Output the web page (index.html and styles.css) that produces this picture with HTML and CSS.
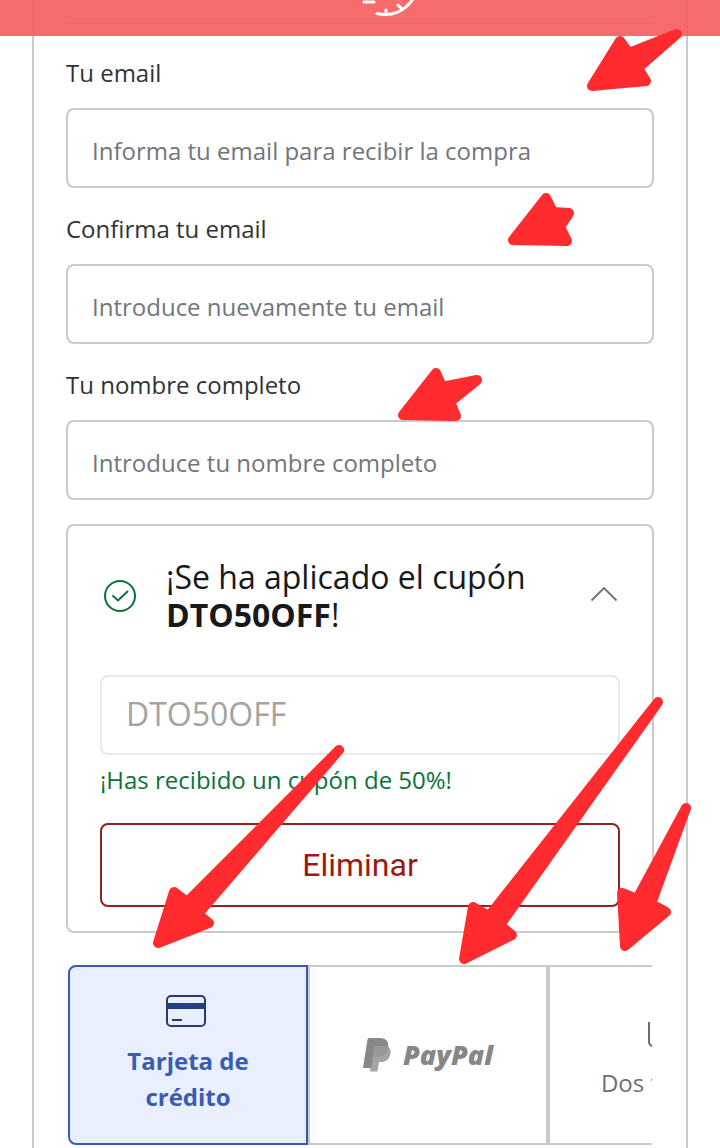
FILE: index.html
```
<!DOCTYPE html>
<html lang="es">
<head>
    <meta charset="UTF-8">
    <meta name="viewport" content="width=device-width, initial-scale=1.0">
    <title>Datos de compra</title>
    <link rel="stylesheet" href="styles.css">
</head>
<body>
    <div class="top-bar">
        <svg class="clock" width="64" height="36" viewBox="0 0 64 36" fill="none" stroke="#fff" stroke-width="3" stroke-linecap="round">
            <path d="M8 2h10"/>
            <path d="M21 13.500C36 17 49 11 57-1"/>
            <path d="M30 14l0-4M45 8l-3-3"/>
        </svg>
    </div>

    <main class="card">
        <hr class="divider">

        <form class="checkout">
            <div class="field">
                <label for="email">Tu email</label>
                <input type="email" id="email" placeholder="Informa tu email para recibir la compra">
            </div>
            <div class="field">
                <label for="email-confirm">Confirma tu email</label>
                <input type="email" id="email-confirm" placeholder="Introduce nuevamente tu email">
            </div>
            <div class="field">
                <label for="full-name">Tu nombre completo</label>
                <input type="text" id="full-name" placeholder="Introduce tu nombre completo">
            </div>

            <section class="coupon">
                <div class="coupon-header">
                    <svg class="coupon-check" width="32" height="32" viewBox="0 0 32 32" fill="none" stroke="#0a7239" stroke-width="2">
                        <circle cx="16" cy="16" r="15"/>
                        <path d="M8.500 15.500l5.500 5 10-9.500"/>
                    </svg>
                    <h2>¡Se ha aplicado el cupón <strong>DTO50OFF</strong>!</h2>
                    <button type="button" class="coupon-toggle" aria-label="Ocultar cupón">
                        <svg width="28" height="20" viewBox="0 0 28 20" fill="none" stroke="#6c7074" stroke-width="1.800">
                            <path d="M1.500 14.500L14 2l12.500 12.500"/>
                        </svg>
                    </button>
                </div>
                <input type="text" class="coupon-code" value="DTO50OFF" aria-label="Cupón" disabled>
                <p class="coupon-message">¡Has recibido un cupón de 50%!</p>
                <button type="button" class="remove-button">Eliminar</button>
            </section>

            <div class="payment-methods">
                <button type="button" class="method active">
                    <svg width="44" height="32" viewBox="0 0 44 32" fill="none" stroke="#283a6e" stroke-width="2">
                        <rect x="1" y="1" width="38" height="30" rx="4"/>
                        <path d="M1 11h38" stroke="#243f82" stroke-width="6"/>
                        <path d="M6 25h10"/>
                    </svg>
                    <span>Tarjeta de crédito</span>
                </button>
                <button type="button" class="method">
                    <span class="paypal">
                        <svg width="28" height="34" viewBox="0 0 28 34">
                            <path fill="#a5a5a5" d="M10 8h14.500c2.500 1.800 3.500 4.700 2.900 8-1 5.500-4.600 8-9.700 8h-1.700L14.300 33.500H7z"/>
                            <path fill="#878787" d="M4.500 1.500Q4.700 0 6.200 0H16c6.500 0 10.200 3 9.200 9-1 6.500-5 9.300-11 9.300h-2.800c-1 0-1.500.7-1.700 1.700L8.300 30H0z"/>
                            <path fill="#989898" d="M11 8h14.300c-.8 7-5 10.300-11.100 10.300h-2.800c-1 0-1.500.7-1.700 1.700L8.600 28z"/>
                        </svg>
                        PayPal
                    </span>
                </button>
                <button type="button" class="method">
                    <svg width="40" height="40" viewBox="0 0 40 40" fill="none" stroke="#6c7074" stroke-width="2">
                        <path d="M1 13v20a4 4 0 0 0 4 4h26"/>
                        <rect x="8" y="5" width="31" height="24" rx="4"/>
                    </svg>
                    <span>Dos tarjetas</span>
                </button>
            </div>
        </form>
    </main>

    <!-- Hand-placed arrows over the form -->
    <svg class="arrows" width="720" height="1148" viewBox="0 0 720 1148">
        <polygon points="592,86 620,41 629,53 677,34 638,68 646,81"/>
        <polygon points="513,240 546,198 553,212 569,213 560,227 567,241"/>
        <polygon points="403,415 436,373 442,387 477,380 450,402 456,416"/>
        <polygon points="158,943 174,892 187,902 339,750 198,914 209,923"/>
        <polygon points="464,959 473,907 489,916 658,702 500,925 512,935"/>
        <polygon points="625,946 622,893 637,899 686,808 651,904 666,912"/>
    </svg>
</body>
</html>
```

FILE: styles.css
```
* {
    box-sizing: border-box;
}
body {
    margin: 0;
    background-color: #fff;
    color: #2f3336;
    font-family: "Open Sans", sans-serif;
    font-size: 24px;
    line-height: 36px;
    overflow-x: hidden;
}
button, input {
    font-family: inherit;
    font-size: inherit;
}
.top-bar {
    position: fixed;
    top: 0;
    left: 0;
    right: 0;
    height: 36px;
    display: flex;
    justify-content: center;
    background-color: rgba(245, 96, 96, 0.92);
}
.clock {
    margin-left: 56px;
}
.card {
    min-height: 100vh;
    margin: 0 32px;
    padding: 22px 32px 32px;
    border: solid #c8cbce;
    border-width: 0 2px;
}
.divider {
    height: 2px;
    margin: 0 0 32px;
    border: none;
    background-color: #c8cbce;
}
.field {
    margin-bottom: 24px;
}
.field label {
    display: block;
    margin-bottom: 18px;
    line-height: 34px;
}
.field input, .coupon-code {
    display: block;
    width: 100%;
    height: 80px;
    padding: 4px 24px 0;
    border: 2px solid #c8cbce;
    border-radius: 8px;
    background-color: #fff;
}
.field input::placeholder {
    color: #70767b;
    opacity: 1;
}
.coupon {
    padding: 32px 32px 24px;
    border: 2px solid #c8cbce;
    border-radius: 8px;
}
.coupon-header {
    display: flex;
    align-items: center;
    gap: 30px;
    margin-bottom: 41px;
    padding: 0 2px 0 4px;
}
.coupon-header h2 {
    flex: 1;
    margin: 0;
    color: #17191b;
    font-size: 32px;
    font-weight: 400;
    line-height: 38px;
}
.coupon-check {
    flex: none;
}
.coupon-toggle {
    display: flex;
    padding: 0;
    border: none;
    background: none;
}
.coupon-code {
    padding: 0 24px 4px;
    border-color: #e8e9ea;
    color: #a3a3a3;
    font-size: 32px;
}
.coupon-message {
    margin: 8px 0 26px;
    color: #0a7239;
    line-height: 34px;
}
.remove-button {
    display: block;
    width: 100%;
    height: 84px;
    border: 2px solid #94211a;
    border-radius: 8px;
    background-color: #fff;
    color: #9c1a10;
    font-family: Roboto, sans-serif;
    font-size: 32px;
}
.payment-methods {
    display: flex;
    margin: 32px 2px 0;
    overflow: hidden;
}
.method {
    flex: 0 0 240px;
    height: 180px;
    display: flex;
    flex-direction: column;
    align-items: center;
    justify-content: center;
    gap: 16px;
    padding: 0 32px;
    border: 2px solid #c8cbce;
    background-color: #fff;
    color: #6c7074;
    line-height: 36px;
}
.method.active {
    border-color: #3a5bb5;
    border-radius: 8px 0 0 8px;
    background-color: #e9effc;
    color: #3a5bb5;
    font-weight: 700;
}
.paypal {
    display: flex;
    align-items: center;
    gap: 12px;
    color: #878787;
    font-size: 27px;
    font-style: italic;
    font-weight: 800;
}
.arrows {
    position: absolute;
    top: 0;
    left: 0;
    fill: #ff2b2f;
    stroke: #ff2b2f;
    stroke-width: 10;
    stroke-linejoin: round;
    pointer-events: none;
}
```
